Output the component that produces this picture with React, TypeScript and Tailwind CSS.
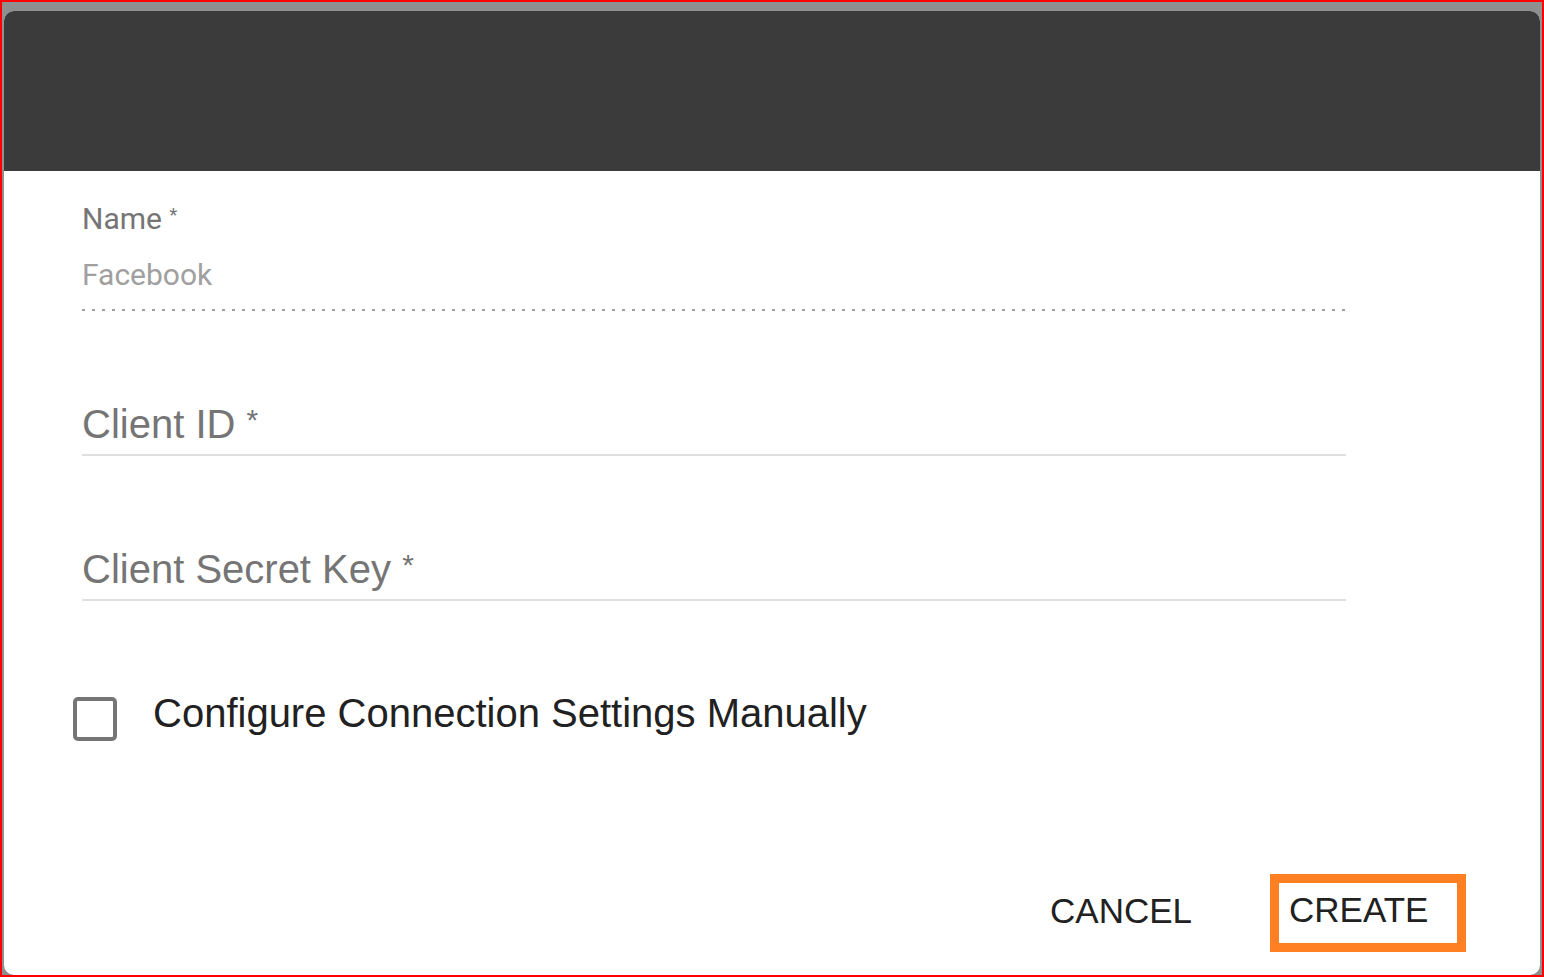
function TextField({ label }: { label: string }) {
  return (
    <div className="flex flex-col">
      <label className="h-[40px] whitespace-pre text-[40px] leading-[40px] text-[#757575]">
        {label} <span className="relative -top-[8px] text-[30px]">*</span>
      </label>
      <div className="mt-[10px] h-[2px] w-full bg-[#e0e0e0]" />
    </div>
  );
}

export default function App() {
  return (
    <div className="flex h-[977px] w-[1544px] flex-col overflow-hidden border-2 border-[#ff0000] bg-[#8f8f8f] pt-[9px] pl-[2px] font-['Liberation_Sans',Arial,sans-serif]">
      <div className="flex w-[1536px] grow flex-col overflow-hidden rounded-[10px] bg-white">
        <header className="h-[160px] shrink-0 bg-[#3b3b3b]" />

        <div className="flex flex-col pl-[78px] pr-[194px] pt-[33px]">
          <div className="flex flex-col font-['Roboto',sans-serif]">
            <span className="h-[30px] text-[30px] leading-[30px] text-[#757575]">
              Name <span className="relative -top-[8px] text-[18px]">*</span>
            </span>
            <span className="mt-[26px] h-[30px] text-[30px] leading-[30px] text-[#a0a0a0]">
              Facebook
            </span>
            <div className="mt-[19px] h-[2px] w-full bg-[repeating-linear-gradient(to_right,#9e9e9e_0px,#9e9e9e_3px,transparent_3px,transparent_10px)]" />
          </div>

          <div className="mt-[93px]">
            <TextField label="Client ID" />
          </div>
          <div className="mt-[93px]">
            <TextField label="Client Secret Key" />
          </div>

          <div className="mt-[92px] ml-[-9px] flex items-start gap-[36px]">
            <div className="mt-[4px] h-[44px] w-[44px] rounded-[5px] border-[4px] border-[#757575]" />
            <span className="h-[40px] text-[40px] leading-[40px] text-[#212121]">
              Configure Connection Settings Manually
            </span>
          </div>
        </div>

        <div className="mt-[133px] flex items-center justify-end gap-[78px] pr-[74px]">
          <button className="mb-[6px] h-[35px] text-[35px] leading-[35px] text-[#212121]">CANCEL</button>
          <div className="h-[78px] w-[196px] border-[9px] border-[#ff8022] pt-[9px] pl-[10px]">
            <button className="h-[35px] text-[35px] leading-[35px] text-[#212121]">CREATE</button>
          </div>
        </div>
      </div>
    </div>
  );
}
